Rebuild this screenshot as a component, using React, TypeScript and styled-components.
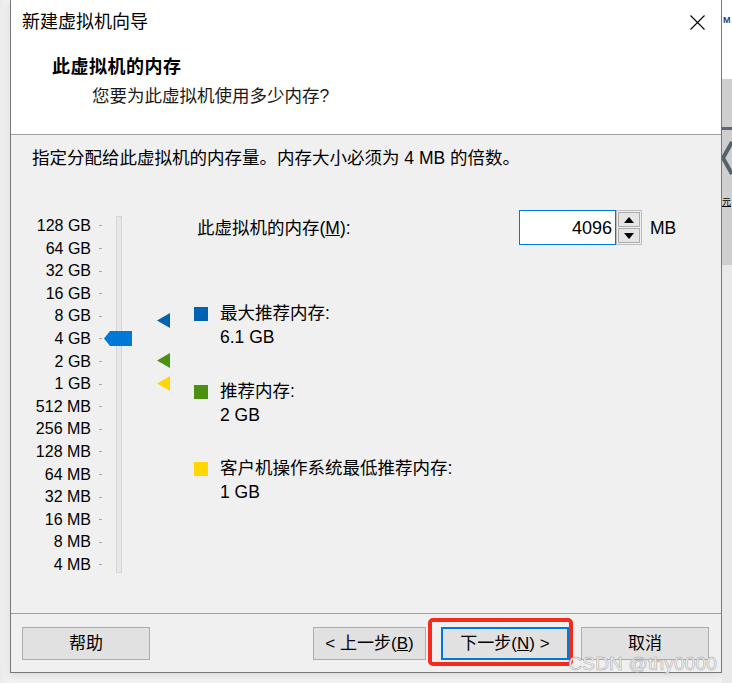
import React from "react";
import styled, { createGlobalStyle } from "styled-components";

const GlobalStyle = createGlobalStyle`
  html, body { margin: 0; padding: 0; background: #f1f1f1; }
  body { font-family: "Liberation Sans", "Noto Sans CJK SC", sans-serif; color: #000; }
  * { box-sizing: border-box; }
`;

const Page = styled.div`
  position: relative;
  width: 732px;
  height: 683px;
  display: flex;
  align-items: flex-start;
  padding-left: 10px;
  background: linear-gradient(to right, #ebebeb, #f3f3f3 10px);
  overflow: hidden;
`;

const Dialog = styled.div`
  width: 712px;
  height: 673px;
  flex: none;
  border: 1px solid #787878;
  border-top: none;
  background: #f0f0f0;
  display: flex;
  flex-direction: column;
  box-shadow: 0 3px 8px rgba(0, 0, 0, 0.1);
`;

const Header = styled.header`
  height: 135px;
  flex: none;
  background: #fff;
  border-bottom: 1px solid #a0a0a0;
  display: flex;
  flex-direction: column;
`;

const TitleBar = styled.div`
  height: 44px;
  display: flex;
  align-items: center;
  justify-content: space-between;
  padding: 0 16px 0 11px;
`;

const Title = styled.span`
  font-size: 18px;
  line-height: 24px;
`;

const CloseIcon = styled.svg`
  width: 15px;
  height: 15px;
  display: block;
`;

const Heading = styled.div`
  margin: 11px 0 0 41px;
  font-size: 18px;
  font-weight: bold;
  line-height: 24px;
  letter-spacing: 0.5px;
`;

const SubHeading = styled.div`
  margin: 5px 0 0 81px;
  font-size: 17.5px;
  line-height: 24px;
  color: #1a1a1a;
`;

const Body = styled.main`
  flex: 1;
  padding-top: 13px;
  display: flex;
  flex-direction: column;
`;

const Intro = styled.p`
  margin: 0 0 0 21px;
  font-size: 17.5px;
  line-height: 20px;
`;

const Main = styled.div`
  margin-top: 42px;
  display: flex;
  align-items: flex-start;
`;

const Scale = styled.div`
  display: flex;
  align-items: flex-start;
`;

const ScaleLabels = styled.div`
  display: flex;
  flex-direction: column;
  padding-top: 4.7px;
`;

const ScaleRow = styled.div`
  height: 22.6px;
  display: flex;
  align-items: center;
  font-size: 16px;
`;

const ScaleText = styled.span`
  width: 80px;
  text-align: right;
  line-height: 20px;
`;

const Tick = styled.span`
  width: 3px;
  height: 1px;
  margin-left: 8px;
  background: #a8a8a8;
`;

const Track = styled.div`
  position: relative;
  margin: 6px 0 0 14px;
  width: 6px;
  height: 357px;
  background: #e7e7e7;
  border: 1px solid #d6d6d6;
`;

const Thumb = styled.svg`
  position: absolute;
  left: -13px;
  top: 114px;
  width: 28px;
  height: 15px;
  display: block;
`;

const Markers = styled.div`
  position: relative;
  margin-left: 35px;
  width: 13px;
  height: 360px;
`;

const Marker = styled.svg<{ $top: number }>`
  position: absolute;
  left: 0;
  top: ${(p) => p.$top}px;
  width: 13px;
  height: 15px;
  display: block;
`;

const RightPanel = styled.div`
  margin-left: 24px;
  display: flex;
  flex-direction: column;
`;

const MemoryRow = styled.div`
  height: 35px;
  display: flex;
  align-items: center;
`;

const MemoryLabel = styled.span`
  width: 325px;
  padding-left: 3px;
  font-size: 17.5px;
  line-height: 22px;
`;

const NumberBox = styled.div`
  width: 97px;
  height: 35px;
  border: 1px solid #0078d7;
  background: #fff;
  display: flex;
  align-items: center;
  justify-content: flex-end;
  padding-right: 3px;
  font-size: 18px;
  line-height: 22px;
`;

const Spinner = styled.div`
  width: 26px;
  height: 35px;
  border: 1px solid #bdbdbd;
  display: flex;
  flex-direction: column;
  padding: 1px;
  gap: 1px;
  background: #f0f0f0;
`;

const SpinButton = styled.div`
  flex: 1;
  background: #e5e5e5;
  border: 1px solid #acacac;
  display: flex;
  align-items: center;
  justify-content: center;
`;

const Arrow = styled.svg`
  width: 10px;
  height: 6px;
  display: block;
`;

const Unit = styled.span`
  margin-left: 8px;
  font-size: 17.5px;
  line-height: 22px;
`;

const Legend = styled.div`
  margin-top: 56px;
  display: flex;
  flex-direction: column;
  gap: 29.5px;
`;

const LegendItem = styled.div`
  display: flex;
  align-items: flex-start;
`;

const Swatch = styled.span<{ $color: string }>`
  width: 14px;
  height: 14px;
  margin-top: 6px;
  background: ${(p) => p.$color};
  flex: none;
`;

const LegendText = styled.div`
  margin-left: 12px;
  display: flex;
  flex-direction: column;
  font-size: 17.5px;
  line-height: 24px;
`;

const Footer = styled.footer`
  height: 59px;
  flex: none;
  border-top: 1px solid #a0a0a0;
  display: flex;
  align-items: flex-start;
  padding: 13px 12px 0 11px;
`;

const Button = styled.div<{ $width: number; $primary?: boolean }>`
  position: relative;
  width: ${(p) => p.$width}px;
  height: 33px;
  flex: none;
  background: #e1e1e1;
  border: ${(p) => (p.$primary ? "2px solid #0078d7" : "1px solid #adadad")};
  display: flex;
  align-items: center;
  justify-content: center;
  font-size: 17px;
  line-height: 22px;
  color: #000;
`;

const Spacer = styled.div`
  flex: 1;
`;

const ButtonGroup = styled.div`
  display: flex;
  gap: 12px;
`;

const BackButtonWrap = styled.div`
  margin-right: 15px;
  display: flex;
`;

const Highlight = styled.div`
  position: absolute;
  top: -11px;
  left: -15px;
  right: -6px;
  bottom: -8px;
  border: 4px solid #f42a1d;
  border-radius: 5px;
  pointer-events: none;
`;

const Watermark = styled.div`
  position: absolute;
  right: 15px;
  bottom: 8px;
  font-size: 19px;
  line-height: 22px;
  color: #f4f4f4;
  -webkit-text-stroke: 0.4px #a8a8a8;
  text-shadow: 0 0 1px rgba(0, 0, 0, 0.25);
  letter-spacing: 0.2px;
`;

const BackStrip = styled.div`
  width: 10px;
  height: 683px;
  flex: none;
  display: flex;
  flex-direction: column;
  overflow: hidden;
  background: #e9e9e9;
`;

const StripTop = styled.div`
  height: 79px;
  background: #fff;
  padding-top: 15px;
  padding-left: 1px;
  font-size: 9px;
  font-weight: bold;
  color: #1e3f8a;
  white-space: nowrap;
  line-height: 10px;
`;

const StripBand = styled.div`
  height: 186px;
  background: #cfcfcf;
  display: flex;
  flex-direction: column;
  padding-top: 48px;
`;

const StripDash = styled.div`
  height: 3px;
  width: 10px;
  background: #5b6670;
`;

const StripChevron = styled.svg`
  width: 10px;
  height: 40px;
  margin-top: 8px;
  display: block;
`;

const StripChar = styled.div`
  margin-top: 14px;
  font-size: 9px;
  line-height: 20px;
  white-space: nowrap;
  text-decoration: underline;
`;

const scaleLabels = [
  "128 GB",
  "64 GB",
  "32 GB",
  "16 GB",
  "8 GB",
  "4 GB",
  "2 GB",
  "1 GB",
  "512 MB",
  "256 MB",
  "128 MB",
  "64 MB",
  "32 MB",
  "16 MB",
  "8 MB",
  "4 MB",
];

const markers = [
  { top: 102.5, color: "#0063b1" },
  { top: 142.5, color: "#4a910f" },
  { top: 165.5, color: "#ffd800" },
];

const legend = [
  { color: "#0063b1", label: "最大推荐内存:", value: "6.1 GB" },
  { color: "#4a910f", label: "推荐内存:", value: "2 GB" },
  { color: "#ffd800", label: "客户机操作系统最低推荐内存:", value: "1 GB" },
];

export default function App() {
  return (
    <>
      <GlobalStyle />
      <Page>
        <Dialog>
          <Header>
            <TitleBar>
              <Title>新建虚拟机向导</Title>
              <CloseIcon viewBox="0 0 15 15">
                <path d="M0.5 0.5 L14.5 14.5 M14.5 0.5 L0.5 14.5" stroke="#000" strokeWidth="1.1" />
              </CloseIcon>
            </TitleBar>
            <Heading>此虚拟机的内存</Heading>
            <SubHeading>您要为此虚拟机使用多少内存?</SubHeading>
          </Header>
          <Body>
            <Intro>指定分配给此虚拟机的内存量。内存大小必须为 4 MB 的倍数。</Intro>
            <Main>
              <Scale>
                <ScaleLabels>
                  {scaleLabels.map((l) => (
                    <ScaleRow key={l}>
                      <ScaleText>{l}</ScaleText>
                      <Tick />
                    </ScaleRow>
                  ))}
                </ScaleLabels>
                <Track>
                  <Thumb viewBox="0 0 28 15">
                    <polygon points="0,7.5 6,0 28,0 28,15 6,15" fill="#0078d7" />
                  </Thumb>
                </Track>
                <Markers>
                  {markers.map((m) => (
                    <Marker key={m.color} $top={m.top} viewBox="0 0 13 15">
                      <polygon points="13,0 0,7.5 13,15" fill={m.color} />
                    </Marker>
                  ))}
                </Markers>
              </Scale>
              <RightPanel>
                <MemoryRow>
                  <MemoryLabel>
                    此虚拟机的内存(<u>M</u>):
                  </MemoryLabel>
                  <NumberBox>4096</NumberBox>
                  <Spinner>
                    <SpinButton>
                      <Arrow viewBox="0 0 10 6">
                        <polygon points="0,6 5,0 10,6" fill="#000" />
                      </Arrow>
                    </SpinButton>
                    <SpinButton>
                      <Arrow viewBox="0 0 10 6">
                        <polygon points="0,0 10,0 5,6" fill="#000" />
                      </Arrow>
                    </SpinButton>
                  </Spinner>
                  <Unit>MB</Unit>
                </MemoryRow>
                <Legend>
                  {legend.map((item) => (
                    <LegendItem key={item.label}>
                      <Swatch $color={item.color} />
                      <LegendText>
                        <span>{item.label}</span>
                        <span>{item.value}</span>
                      </LegendText>
                    </LegendItem>
                  ))}
                </Legend>
              </RightPanel>
            </Main>
          </Body>
          <Footer>
            <Button $width={128}>帮助</Button>
            <Spacer />
            <BackButtonWrap>
              <Button $width={113}>
                &lt; 上一步(<u>B</u>)
              </Button>
            </BackButtonWrap>
            <ButtonGroup>
              <Button $width={128} $primary>
                下一步(<u>N</u>) &gt;
                <Highlight />
              </Button>
              <Button $width={128}>取消</Button>
            </ButtonGroup>
          </Footer>
        </Dialog>
        <BackStrip>
          <StripTop>M</StripTop>
          <StripBand>
            <StripDash />
            <StripChevron viewBox="0 0 10 40">
              <polyline points="10,4 1,20 10,36" fill="none" stroke="#56616b" strokeWidth="4" />
            </StripChevron>
            <StripChar>元</StripChar>
          </StripBand>
        </BackStrip>
        <Watermark>CSDN @thy0000</Watermark>
      </Page>
    </>
  );
}
